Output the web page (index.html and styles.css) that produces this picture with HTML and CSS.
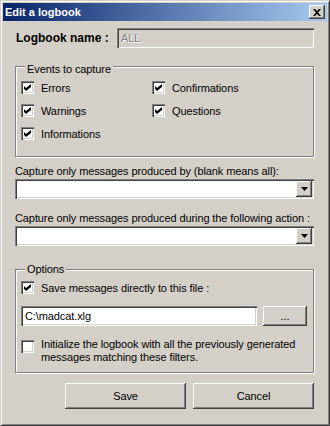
FILE: index.html
```html
<!DOCTYPE html>
<html>
<head>
<meta charset="utf-8">
<link rel="stylesheet" href="styles.css">
</head>
<body>
<div class="window">
  <div class="titlebar">
    <span class="title">Edit a logbook</span>
    <span class="close"><svg width="8" height="7" viewBox="0 0 8 7"><path d="M0 0h2l2 2l2-2h2v0l-3 3.5l3 3.5h-2l-2-2l-2 2h-2l3-3.5z" fill="#000"/></svg></span>
  </div>
  <div class="content">
    <div class="name-row">
      <span class="name-label">Logbook name :</span>
      <div class="field disabled">ALL</div>
    </div>

    <div class="group events">
      <div class="legend">Events to capture</div>
      <div class="check-grid">
        <div class="check"><span class="box"><svg width="7" height="7" viewBox="0 0 7 7"><path d="M0 2l2 2l5-4v3l-5 4l-2-2z" fill="#000"/></svg></span>Errors</div>
        <div class="check"><span class="box"><svg width="7" height="7" viewBox="0 0 7 7"><path d="M0 2l2 2l5-4v3l-5 4l-2-2z" fill="#000"/></svg></span>Confirmations</div>
        <div class="check"><span class="box"><svg width="7" height="7" viewBox="0 0 7 7"><path d="M0 2l2 2l5-4v3l-5 4l-2-2z" fill="#000"/></svg></span>Warnings</div>
        <div class="check"><span class="box"><svg width="7" height="7" viewBox="0 0 7 7"><path d="M0 2l2 2l5-4v3l-5 4l-2-2z" fill="#000"/></svg></span>Questions</div>
        <div class="check"><span class="box"><svg width="7" height="7" viewBox="0 0 7 7"><path d="M0 2l2 2l5-4v3l-5 4l-2-2z" fill="#000"/></svg></span>Informations</div>
      </div>
    </div>

    <div class="label first">Capture only messages produced by (blank means all):</div>
    <div class="combo"><span class="drop"><svg width="7" height="4" viewBox="0 0 7 4"><path d="M0 0h7l-3.5 4z" fill="#000"/></svg></span></div>

    <div class="label second">Capture only messages produced during the following action :</div>
    <div class="combo"><span class="drop"><svg width="7" height="4" viewBox="0 0 7 4"><path d="M0 0h7l-3.5 4z" fill="#000"/></svg></span></div>

    <div class="group options">
      <div class="legend">Options</div>
      <div class="check"><span class="box"><svg width="7" height="7" viewBox="0 0 7 7"><path d="M0 2l2 2l5-4v3l-5 4l-2-2z" fill="#000"/></svg></span>Save messages directly to this file :</div>
      <div class="file-row">
        <div class="field file">C:\madcat.xlg</div>
        <span class="btn browse">...</span>
      </div>
      <div class="check multi"><span class="box"></span><span class="multi-text">Initialize the logbook with all the previously generated messages matching these filters.</span></div>
    </div>

    <div class="buttons">
      <span class="btn action">Save</span>
      <span class="btn action">Cancel</span>
    </div>
  </div>
</div>
</body>
</html>
```

FILE: styles.css
```css
* { box-sizing: border-box; margin: 0; padding: 0; }
body {
  margin: 0;
  background: #d4d0c8;
  font-family: "Liberation Sans", Arial, sans-serif;
  font-size: 11px;
  letter-spacing: -0.1px;
  color: #000;
}
.window {
  width: 330px;
  height: 426px;
  border: 1px solid;
  border-color: #d4d0c8 #404040 #404040 #d4d0c8;
  box-shadow: inset 1px 1px #fff, inset -1px -1px #808080;
  padding: 2px;
  background: #d4d0c8;
}
.titlebar {
  height: 18px;
  background: linear-gradient(to right, #0a246a, #a6caf0);
  display: flex;
  align-items: center;
  justify-content: space-between;
  padding: 0 2px 0 2px;
}
.title {
  color: #fff;
  font-weight: bold;
  font-size: 11px;
  letter-spacing: 0;
}
.close {
  width: 16px;
  height: 14px;
  background: #d4d0c8;
  box-shadow: inset -1px -1px #404040, inset 1px 1px #fff, inset -2px -2px #808080;
  display: flex;
  align-items: center;
  justify-content: center;
}
.close svg { display: block; }
.content {
  padding: 0 13px 0 12px;
}
.name-row {
  margin-top: 7px;
  height: 20px;
  display: flex;
  align-items: center;
}
.name-label {
  font-weight: bold;
  font-size: 12px;
  letter-spacing: 0;
  padding-left: 1px;
}
.field {
  height: 20px;
  background: #fff;
  box-shadow: inset 1px 1px #808080, inset 2px 2px #404040, inset -1px -1px #fff, inset -2px -2px #d4d0c8;
  padding: 0 4px;
  display: flex;
  align-items: center;
}
.field.disabled {
  margin-left: auto;
  width: 197px;
  background: #d4d0c8;
  color: #808080;
  text-shadow: 1px 1px #fff;
}
.group {
  border: 1px solid #808080;
  box-shadow: inset 1px 1px #fff, 1px 1px #fff;
}
.legend {
  width: fit-content;
  margin: -7px 0 0 4px;
  padding: 0 2px;
  line-height: 13px;
  background: #d4d0c8;
  position: relative;
}
.events { margin-top: 18px; padding: 3px 0 11px 5px; }
.check-grid {
  display: grid;
  grid-template-columns: 131px 1fr;
}
.check {
  display: flex;
  align-items: center;
  gap: 7px;
  height: 23px;
}
.box {
  width: 13px;
  height: 13px;
  flex: none;
  background: #fff;
  box-shadow: inset 1px 1px #808080, inset 2px 2px #404040, inset -1px -1px #fff, inset -2px -2px #d4d0c8;
  display: flex;
  align-items: center;
  justify-content: center;
}
.box svg { display: block; }
.label { line-height: 13px; white-space: nowrap; }
.label.first { margin-top: 8px; }
.label.second { margin-top: 13px; }
.combo {
  margin-top: 1px;
  height: 20px;
  background: #fff;
  box-shadow: inset 1px 1px #808080, inset 2px 2px #404040, inset -1px -1px #fff, inset -2px -2px #d4d0c8;
  display: flex;
  justify-content: flex-end;
  padding: 2px;
}
.drop {
  width: 16px;
  height: 16px;
  background: #d4d0c8;
  box-shadow: inset -1px -1px #404040, inset 1px 1px #fff, inset -2px -2px #808080;
  display: flex;
  align-items: center;
  justify-content: center;
}
.drop svg { display: block; }
.options { margin-top: 23px; padding: 0 6px 8px 5px; }
.file-row {
  margin-top: 7px;
  display: flex;
  justify-content: space-between;
}
.field.file { width: 236px; }
.btn {
  display: flex;
  align-items: center;
  justify-content: center;
  background: #d4d0c8;
  box-shadow: inset -1px -1px #404040, inset 1px 1px #fff, inset -2px -2px #808080;
}
.browse { width: 44px; height: 20px; }
.check.multi {
  height: auto;
  margin-top: 12px;
  align-items: flex-start;
}
.check.multi .box { margin-top: 2px; }
.multi-text { line-height: 13px; }
.buttons {
  margin-top: 10px;
  display: flex;
  justify-content: flex-end;
  gap: 7px;
}
.btn.action { width: 121px; height: 26px; }
```
